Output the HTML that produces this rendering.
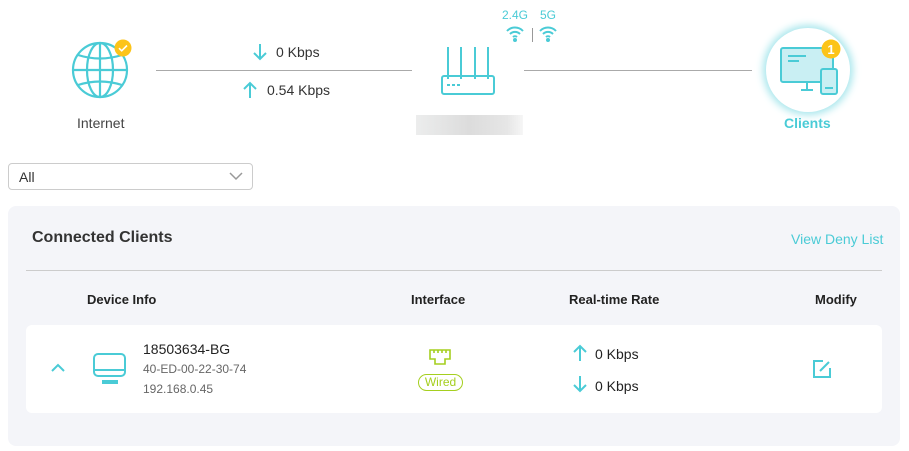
<!DOCTYPE html>
<html><head><meta charset="utf-8"><style>
*{margin:0;padding:0;box-sizing:border-box}
body{width:909px;height:451px;background:#fff;font-family:"Liberation Sans",sans-serif;color:#333;position:relative;overflow:hidden}
.a{position:absolute;white-space:nowrap}
</style></head><body>
<svg class="a" style="left:68px;top:38px" width="64" height="64" viewBox="0 0 64 64" fill="none" stroke="#4acbd6" stroke-width="2.2">
<circle cx="32" cy="32" r="27"/><ellipse cx="32" cy="32" rx="13" ry="27"/><line x1="32" y1="5" x2="32" y2="59"/><line x1="5" y1="32" x2="59" y2="32"/><path d="M10 17 Q32 24 54 17"/><path d="M10 47 Q32 40 54 47"/></svg>
<svg class="a" style="left:114px;top:39px" width="18" height="18"><circle cx="9" cy="9" r="8.5" fill="#fcc419"/><path d="M5 9.2l2.7 2.6L13 6.5" stroke="#fff" stroke-width="1.6" fill="none"/></svg>
<div class="a" style="left:77px;top:115px;font-size:14px;color:#444">Internet</div>
<div class="a" style="left:156px;top:70px;width:256px;height:1px;background:#aaa"></div>
<svg class="a" style="left:253px;top:43px" width="14" height="18" stroke="#4acbd6" stroke-width="2" fill="none"><path d="M7 1v15M1 10l6 6 6-6"/></svg>
<div class="a" style="left:276px;top:44px;font-size:14px">0 Kbps</div>
<svg class="a" style="left:243px;top:81px" width="14" height="18" stroke="#4acbd6" stroke-width="2" fill="none"><path d="M7 17V2M1 8l6-6 6 6"/></svg>
<div class="a" style="left:267px;top:82px;font-size:14px">0.54 Kbps</div>
<svg class="a" style="left:438px;top:44px" width="60" height="54" stroke="#4acbd6" stroke-width="2" fill="none"><path d="M10 3v32M23 3v32M37 3v32M50 3v32"/><rect x="4" y="32" width="52" height="18" rx="2"/><path d="M9 41h3M14 41h3M19 41h3" stroke-width="2"/></svg>
<div class="a" style="left:502px;top:8px;font-size:12px;color:#4acbd6">2.4G</div>
<div class="a" style="left:540px;top:8px;font-size:12px;color:#4acbd6">5G</div>
<svg class="a" style="left:505px;top:24px" width="20" height="18" fill="none" stroke="#4acbd6" stroke-width="2"><path d="M2 7a11 11 0 0 1 16 0M5 10a7 7 0 0 1 10 0M8 13a3 3 0 0 1 4 0"/><circle cx="10" cy="16" r="1" fill="#4acbd6"/></svg>
<div class="a" style="left:532px;top:28px;width:1px;height:14px;background:#999"></div>
<svg class="a" style="left:538px;top:24px" width="20" height="18" fill="none" stroke="#4acbd6" stroke-width="2"><path d="M2 7a11 11 0 0 1 16 0M5 10a7 7 0 0 1 10 0M8 13a3 3 0 0 1 4 0"/><circle cx="10" cy="16" r="1" fill="#4acbd6"/></svg>
<div class="a" style="left:416px;top:115px;width:107px;height:20px;background:linear-gradient(90deg,#eceded,#dcdcdc 50%,#e6e6e6 85%,#f6f6f6)"></div>
<div class="a" style="left:524px;top:70px;width:228px;height:1px;background:#aaa"></div>
<div class="a" style="left:766px;top:28px;width:84px;height:84px;border-radius:50%;background:#fff;box-shadow:0 0 8px 3px #a7e6ec"></div>
<svg class="a" style="left:780px;top:45px" width="60" height="52" fill="none" stroke="#4acbd6" stroke-width="2"><rect x="1" y="3" width="52" height="34" rx="2" fill="#c9eff3"/><path d="M8 11h18M8 16h11M21 45h12M27 37v8"/><rect x="41" y="24" width="16" height="25" rx="2" fill="#c9eff3"/><path d="M45 43h8"/></svg>
<svg class="a" style="left:821px;top:39px" width="20" height="20"><circle cx="10" cy="10" r="9.5" fill="#fcc419"/><text x="10" y="15" font-size="13" font-weight="bold" fill="#fff" text-anchor="middle" font-family="Liberation Sans">1</text></svg>
<div class="a" style="left:784px;top:115px;font-size:14px;font-weight:bold;color:#4acbd6">Clients</div>
<div class="a" style="left:8px;top:163px;width:245px;height:27px;border:1px solid #ccc;border-radius:4px"></div>
<div class="a" style="left:19px;top:169px;font-size:14px">All</div>
<svg class="a" style="left:229px;top:171px" width="14" height="10" stroke="#999" stroke-width="1.5" fill="none"><path d="M1 2l6 6 6-6"/></svg>
<div class="a" style="left:8px;top:206px;width:892px;height:240px;background:#f4f5f9;border-radius:8px"></div>
<div class="a" style="left:32px;top:229px;font-size:16px;font-weight:bold;color:#333">Connected Clients</div>
<div class="a" style="left:791px;top:231px;font-size:14px;color:#4acbd6">View Deny List</div>
<div class="a" style="left:26px;top:270px;width:856px;height:1px;background:#ccc"></div>
<div class="a" style="left:87px;top:292px;font-size:13px;font-weight:bold;color:#222">Device Info</div>
<div class="a" style="left:411px;top:292px;font-size:13px;font-weight:bold;color:#222">Interface</div>
<div class="a" style="left:569px;top:292px;font-size:13px;font-weight:bold;color:#222">Real-time Rate</div>
<div class="a" style="left:815px;top:292px;font-size:13px;font-weight:bold;color:#222">Modify</div>
<div class="a" style="left:26px;top:325px;width:856px;height:88px;background:#fff;border-radius:6px"></div>
<svg class="a" style="left:51px;top:363px" width="14" height="10" stroke="#4acbd6" stroke-width="2" fill="none"><path d="M1 8l6-6 6 6"/></svg>
<svg class="a" style="left:93px;top:353px" width="34" height="32" fill="none" stroke="#4acbd6" stroke-width="2"><rect x="1" y="1" width="31" height="22" rx="4"/><path d="M2 17h30"/><rect x="9" y="27" width="16" height="4" fill="#4acbd6" stroke="none"/></svg>
<div class="a" style="left:143px;top:341px;font-size:14px;color:#222">18503634-BG</div>
<div class="a" style="left:143px;top:362px;font-size:12px;color:#666">40-ED-00-22-30-74</div>
<div class="a" style="left:143px;top:382px;font-size:12px;color:#666">192.168.0.45</div>
<svg class="a" style="left:429px;top:349px" width="22" height="18" fill="none" stroke="#a5cf1f" stroke-width="1.6"><path d="M1 1h20v9h-5v5H6v-5H1z"/><path d="M5 1v3M9 1v3M13 1v3M17 1v3"/></svg>
<div class="a" style="left:418px;top:374px;width:45px;height:17px;border:1.5px solid #a5cf1f;border-radius:9px;font-size:12px;color:#a5cf1f;text-align:center;line-height:14px">Wired</div>
<svg class="a" style="left:573px;top:344px" width="14" height="18" stroke="#4acbd6" stroke-width="2" fill="none"><path d="M7 17V2M1 8l6-6 6 6"/></svg>
<div class="a" style="left:595px;top:346px;font-size:14px;color:#222">0 Kbps</div>
<svg class="a" style="left:573px;top:375px" width="14" height="18" stroke="#4acbd6" stroke-width="2" fill="none"><path d="M7 1v15M1 10l6 6 6-6"/></svg>
<div class="a" style="left:595px;top:378px;font-size:14px;color:#222">0 Kbps</div>
<svg class="a" style="left:812px;top:359px" width="20" height="20" fill="none" stroke="#4acbd6" stroke-width="2"><path d="M11 2H2v16h16V9"/><path d="M8 12l9-9" /></svg>
</body></html>
